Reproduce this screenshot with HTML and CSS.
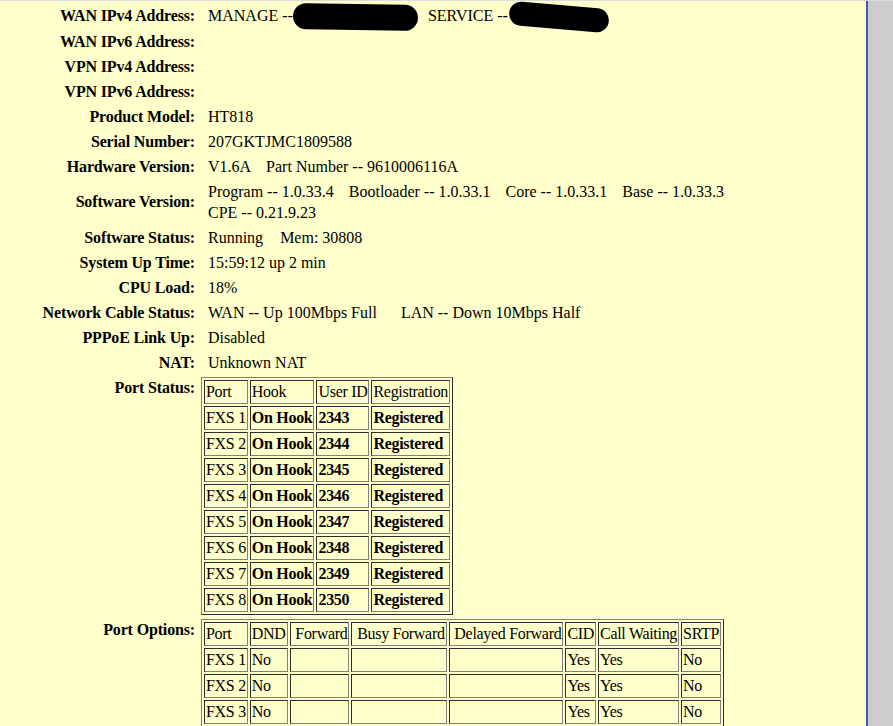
FILE: index.html
```html
<!DOCTYPE html>
<html lang="en">
<head>
<meta charset="utf-8">
<title>Status</title>
<link rel="stylesheet" href="styles.css">
</head>
<body>
<div class="frame">
  <main class="content">
    <table class="info">
      <tr><th>WAN IPv4 Address:</th><td class="val">MANAGE --<span class="redact r1"></span>SERVICE --<span class="redact r2"></span></td></tr>
      <tr><th>WAN IPv6 Address:</th><td class="val"></td></tr>
      <tr><th>VPN IPv4 Address:</th><td class="val"></td></tr>
      <tr><th>VPN IPv6 Address:</th><td class="val"></td></tr>
      <tr><th>Product Model:</th><td class="val">HT818</td></tr>
      <tr><th>Serial Number:</th><td class="val">207GKTJMC1809588</td></tr>
      <tr><th>Hardware Version:</th><td class="val">V1.6A<span class="gap">Part Number -- 9610006116A</span></td></tr>
      <tr><th>Software Version:</th><td class="val">Program -- 1.0.33.4<span class="gap">Bootloader -- 1.0.33.1</span><span class="gap">Core -- 1.0.33.1</span><span class="gap">Base -- 1.0.33.3</span><br>CPE -- 0.21.9.23</td></tr>
      <tr><th>Software Status:</th><td class="val">Running<span class="gap mid">Mem: 30808</span></td></tr>
      <tr><th>System Up Time:</th><td class="val">15:59:12 up 2 min</td></tr>
      <tr><th>CPU Load:</th><td class="val">18%</td></tr>
      <tr><th>Network Cable Status:</th><td class="val">WAN -- Up 100Mbps Full<span class="gap wide">LAN -- Down 10Mbps Half</span></td></tr>
      <tr><th>PPPoE Link Up:</th><td class="val">Disabled</td></tr>
      <tr><th>NAT:</th><td class="val">Unknown NAT</td></tr>
      <tr>
        <th class="top">Port Status:</th>
        <td class="nest">
          <table class="grid">
            <tr><td>Port</td><td>Hook</td><td>User ID</td><td>Registration</td></tr>
            <tr><td>FXS 1</td><td class="b">On Hook</td><td class="b">2343</td><td class="b">Registered</td></tr>
            <tr><td>FXS 2</td><td class="b">On Hook</td><td class="b">2344</td><td class="b">Registered</td></tr>
            <tr><td>FXS 3</td><td class="b">On Hook</td><td class="b">2345</td><td class="b">Registered</td></tr>
            <tr><td>FXS 4</td><td class="b">On Hook</td><td class="b">2346</td><td class="b">Registered</td></tr>
            <tr><td>FXS 5</td><td class="b">On Hook</td><td class="b">2347</td><td class="b">Registered</td></tr>
            <tr><td>FXS 6</td><td class="b">On Hook</td><td class="b">2348</td><td class="b">Registered</td></tr>
            <tr><td>FXS 7</td><td class="b">On Hook</td><td class="b">2349</td><td class="b">Registered</td></tr>
            <tr><td>FXS 8</td><td class="b">On Hook</td><td class="b">2350</td><td class="b">Registered</td></tr>
          </table>
        </td>
      </tr>
      <tr>
        <th class="top">Port Options:</th>
        <td class="nest">
          <table class="grid">
            <tr><td>Port</td><td>DND</td><td>&nbsp;Forward</td><td>&nbsp;Busy Forward</td><td>&nbsp;Delayed Forward</td><td>CID</td><td>Call Waiting</td><td>SRTP</td></tr>
            <tr><td>FXS 1</td><td>No</td><td></td><td></td><td></td><td>Yes</td><td>Yes</td><td>No</td></tr>
            <tr><td>FXS 2</td><td>No</td><td></td><td></td><td></td><td>Yes</td><td>Yes</td><td>No</td></tr>
            <tr><td>FXS 3</td><td>No</td><td></td><td></td><td></td><td>Yes</td><td>Yes</td><td>No</td></tr>
          </table>
        </td>
      </tr>
    </table>
  </main>
  <aside class="side"></aside>
</div>
</body>
</html>
```

FILE: styles.css
```css
html, body {
  margin: 0;
  height: 100%;
  overflow: hidden;
}

body {
  font-family: "Liberation Serif", "Times New Roman", serif;
  font-size: 16px;
  color: #000;
  background: #cccccc;
}

.frame {
  display: flex;
  height: 100vh;
  box-sizing: border-box;
  border-top: 1px solid #dcdcdc;
}

.content {
  flex: 1;
  min-width: 0;
  background: #ffffcc;
  border-right: 2px solid #2f64a5;
  overflow: hidden;
  padding-top: 2px;
}

.side {
  width: 25px;
  background: #cccccc;
}

.info {
  border-collapse: separate;
  border-spacing: 0;
}

.info th {
  width: 195px;
  padding: 2px 6px 2px 0;
  text-align: right;
  font-weight: bold;
  line-height: 21px;
  vertical-align: middle;
  white-space: nowrap;
  letter-spacing: -0.15px;
}

.info th.top {
  vertical-align: top;
}

.info td.val {
  padding: 2px 0 2px 7px;
  line-height: 21px;
  white-space: nowrap;
  vertical-align: middle;
}

.info td.nest {
  padding: 2px 0;
  vertical-align: top;
}

.gap {
  margin-left: 15px;
}

.gap.mid {
  margin-left: 17px;
}

.gap.wide {
  margin-left: 24px;
}

.redact {
  display: inline-block;
  background: #000;
  vertical-align: middle;
}

.r1 {
  width: 125px;
  height: 26px;
  border-radius: 13px;
  margin: -4px 10px -3px 0;
  transform: rotate(1deg);
}

.r2 {
  width: 100px;
  height: 24px;
  border-radius: 12px;
  margin: -3px 0 -3px 1px;
  transform: rotate(5deg);
}

.grid {
  border-collapse: separate;
  border-spacing: 2px;
  border: 1px outset #808080;
  letter-spacing: -0.3px;
}

.grid td {
  border: 1px inset #808080;
  padding: 1px;
  line-height: 20px;
  white-space: nowrap;
  vertical-align: middle;
}

.grid td.b {
  font-weight: bold;
}
```
